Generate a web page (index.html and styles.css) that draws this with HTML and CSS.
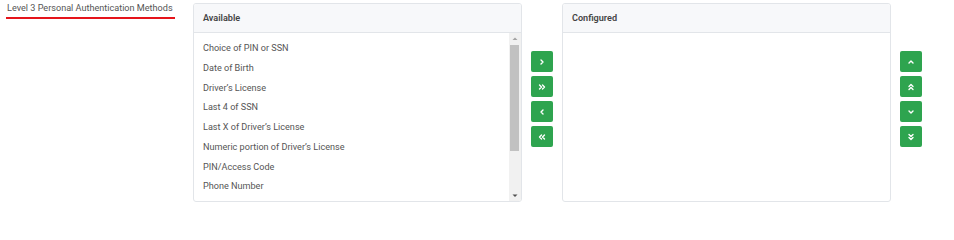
FILE: index.html
```html
<!DOCTYPE html>
<html>
<head>
<meta charset="utf-8">
<link rel="stylesheet" href="styles.css">
</head>
<body>
<div class="row">
  <div class="label-col">
    <span class="label">Level 3 Personal Authentication Methods</span>
  </div>
  <div class="panel">
    <div class="panel-head">Available</div>
    <div class="panel-body">
      <ul class="list">
        <li>Choice of PIN or SSN</li>
        <li>Date of Birth</li>
        <li>Driver’s License</li>
        <li>Last 4 of SSN</li>
        <li>Last X of Driver’s License</li>
        <li>Numeric portion of Driver’s License</li>
        <li>PIN/Access Code</li>
        <li>Phone Number</li>
      </ul>
      <div class="sbar">
        <div class="sbtn"><svg width="12" height="11" viewBox="0 0 12 11"><path d="M3.5 7 L6 4.5 L8.5 7 Z" fill="#a3a3a3"/></svg></div>
        <div class="strack"><div class="sthumb"></div></div>
        <div class="sbtn"><svg width="12" height="11" viewBox="0 0 12 11"><path d="M3.5 4.5 L6 7 L8.5 4.5 Z" fill="#505050"/></svg></div>
      </div>
    </div>
  </div>
  <div class="btns">
    <button class="btn"><svg width="8" height="8" viewBox="0 0 8 8"><polyline points="3,2 5,4 3,6"/></svg></button>
    <button class="btn"><svg width="8" height="8" viewBox="0 0 8 8"><polyline points="1.5,2 3.5,4 1.5,6"/><polyline points="4.5,2 6.5,4 4.5,6"/></svg></button>
    <button class="btn"><svg width="8" height="8" viewBox="0 0 8 8"><polyline points="5,2 3,4 5,6"/></svg></button>
    <button class="btn"><svg width="8" height="8" viewBox="0 0 8 8"><polyline points="3.5,2 1.5,4 3.5,6"/><polyline points="6.5,2 4.5,4 6.5,6"/></svg></button>
  </div>
  <div class="panel">
    <div class="panel-head">Configured</div>
    <div class="panel-body"></div>
  </div>
  <div class="btns">
    <button class="btn"><svg width="8" height="8" viewBox="0 0 8 8"><polyline points="2,5 4,3 6,5"/></svg></button>
    <button class="btn"><svg width="8" height="8" viewBox="0 0 8 8"><polyline points="2,3.5 4,1.5 6,3.5"/><polyline points="2,6.5 4,4.5 6,6.5"/></svg></button>
    <button class="btn"><svg width="8" height="8" viewBox="0 0 8 8"><polyline points="2,3 4,5 6,3"/></svg></button>
    <button class="btn"><svg width="8" height="8" viewBox="0 0 8 8"><polyline points="2,1.5 4,3.5 6,1.5"/><polyline points="2,4.5 4,6.5 6,4.5"/></svg></button>
  </div>
</div>
</body>
</html>
```

FILE: styles.css
```css
html, body {
  margin: 0;
  padding: 0;
  background: #ffffff;
}
body {
  font-family: Roboto, "Liberation Sans", sans-serif;
  color: #555555;
}
.row {
  display: flex;
  align-items: flex-start;
}
.label-col {
  width: 193px;
  flex: none;
  padding-left: 6px;
  box-sizing: border-box;
  padding-top: 2px;
  display: flex;
  align-items: flex-start;
}
.label {
  display: block;
  font-size: 9.1px;
  line-height: 12px;
  padding: 0 2px 3px 1px;
  border-bottom: 2px solid #e5141b;
  color: #555555;
  white-space: nowrap;
}
.panel {
  margin-top: 3px;
  width: 329px;
  height: 199px;
  flex: none;
  box-sizing: border-box;
  border: 1px solid #e2e5e9;
  border-radius: 3px;
  display: flex;
  flex-direction: column;
  background: #ffffff;
  overflow: hidden;
}
.panel-head {
  height: 29px;
  flex: none;
  box-sizing: border-box;
  background: #f7f8fa;
  border-bottom: 1px solid #e2e5e9;
  padding-left: 9px;
  font-size: 9.1px;
  font-weight: 600;
  color: #444444;
  display: flex;
  align-items: center;
}
.panel-body {
  flex: 1;
  display: flex;
  min-height: 0;
}
.list {
  list-style: none;
  margin: 0;
  padding: 6px 0 0 9px;
  flex: 1;
  overflow: hidden;
  font-size: 9.1px;
}
.list li {
  height: 19.75px;
  line-height: 19.75px;
  white-space: nowrap;
  color: #555555;
}
.sbar {
  width: 12px;
  flex: none;
  background: #f1f1f1;
  display: flex;
  flex-direction: column;
}
.sbtn {
  height: 11px;
  flex: none;
  display: flex;
}
.strack {
  flex: 1;
  padding-top: 1px;
}
.sthumb {
  margin-left: 1px;
  width: 9px;
  height: 106px;
  background: #c1c1c1;
}
.btns {
  margin-top: 51px;
  margin-left: 9px;
  margin-right: 9px;
  flex: none;
  display: flex;
  flex-direction: column;
  gap: 4px;
}
.btn {
  width: 22px;
  height: 21px;
  padding: 0;
  border: none;
  border-radius: 2px;
  background: #2ea44f;
  display: flex;
  align-items: center;
  justify-content: center;
  cursor: pointer;
}
.btn svg polyline {
  fill: none;
  stroke: #ffffff;
  stroke-width: 1.4;
  stroke-linecap: round;
  stroke-linejoin: round;
}
```
